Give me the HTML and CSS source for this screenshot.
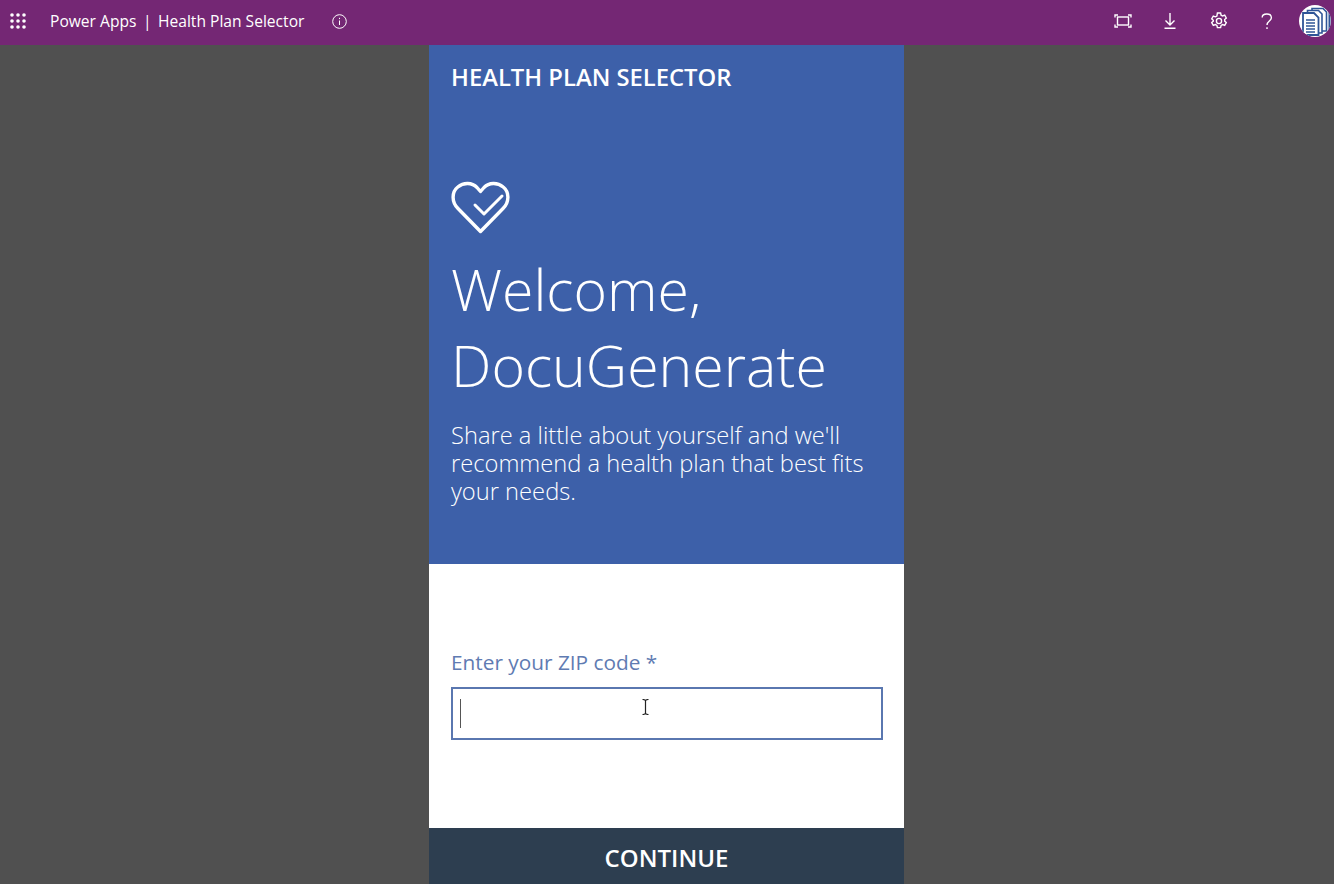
FILE: index.html
```html
<!DOCTYPE html>
<html lang="en">
<head>
  <meta charset="UTF-8">
  <title>Power Apps | Health Plan Selector</title>
  <link rel="stylesheet" href="styles.css">
</head>
<body>
  <!-- Top bar -->
  <div class="topbar">
    <svg class="waffle" width="16" height="16" viewBox="0 0 16 16" fill="#fff">
      <circle cx="2" cy="2" r="1.8"/><circle cx="8" cy="2" r="1.8"/><circle cx="14" cy="2" r="1.8"/>
      <circle cx="2" cy="8" r="1.8"/><circle cx="8" cy="8" r="1.8"/><circle cx="14" cy="8" r="1.8"/>
      <circle cx="2" cy="14" r="1.8"/><circle cx="8" cy="14" r="1.8"/><circle cx="14" cy="14" r="1.8"/>
    </svg>
    <div class="app-title"><span>Power Apps</span><span>|</span><span>Health Plan Selector</span></div>
    <svg class="info" width="15" height="15" viewBox="0 0 15 15" fill="none" stroke="#fff">
      <circle cx="7.5" cy="7.5" r="6.8"/>
      <path d="M7.5 6.5v4.5M7.5 3.8v1.3"/>
    </svg>
    <div class="actions">
      <div class="action">
        <svg width="18" height="14" viewBox="0 0 18 14" fill="none" stroke="#fff" stroke-width="1.4">
          <rect x="3.500" y="3" width="11" height="8"/>
          <path d="M1 3.500V1h3M14 1h3v2.500M1 10.500V13h3M14 13h3v-2.500"/>
        </svg>
      </div>
      <div class="action">
        <svg class="download" width="12" height="16" viewBox="0 0 12 16" fill="none" stroke="#fff" stroke-width="1.4">
          <path d="M6 0v12M1.500 7.500 6 12l4.500-4.500M0.500 15.300h11"/>
        </svg>
      </div>
      <div class="action">
        <svg width="18" height="18" viewBox="0 0 18 18" fill="none" stroke="#fff" stroke-width="1.4">
          <path d="M7.400 1h3.200l.5 2.200 1.500.8 2.100-.8 1.600 2.800-1.600 1.500v1.600l1.600 1.500-1.600 2.800-2.100-.8-1.500.8-.5 2.200H7.400l-.5-2.200-1.500-.8-2.100.8-1.600-2.800 1.600-1.500V8.300L1.700 6.800l1.600-2.800 2.100.8 1.500-.8z"/>
          <circle cx="9" cy="9" r="2.600"/>
        </svg>
      </div>
      <div class="action">
        <svg width="12" height="17" viewBox="0 0 12 17" fill="none" stroke="#fff" stroke-width="1.4">
          <path d="M1.200 4.500C1.200 2.400 3.200 1 5.800 1s4.600 1.500 4.600 3.700c0 3.300-4.400 3.400-4.400 7.300"/>
          <path d="M6 14.300v1.800"/>
        </svg>
      </div>
      <div class="avatar">
        <svg width="32" height="32" viewBox="0 0 32 32">
          <path d="M30.500 6v20" fill="none" stroke="#2f5597" stroke-width="2"/>
          <path d="M13 3.500h11l3.500 3.500v19H13z" fill="#fff" stroke="#2f5597" stroke-width="1.600"/>
          <path d="M8.500 5.500h11l3.500 3.500v19H8.500z" fill="#fff" stroke="#2f5597" stroke-width="1.600"/>
          <path d="M4 8h11l4.500 4.500V30H4z" fill="#fff" stroke="#2f5597" stroke-width="1.800"/>
          <path d="M7 15h9M7 18h9M7 21h9M7 24h9M7 27h9" stroke="#2f5597" stroke-width="1.600"/>
        </svg>
      </div>
    </div>
  </div>

  <!-- Canvas with the app screen -->
  <div class="stage">
    <div class="screen">
      <div class="hero">
        <div class="hero-title">HEALTH PLAN SELECTOR</div>
        <svg class="heart" width="60" height="54" viewBox="0 0 60 54" fill="none" stroke="#fff" stroke-width="3.400" stroke-linejoin="round" stroke-linecap="round">
          <path d="M29.500 50.500 7 27.500C.5 21 .5 11 6.800 6c6-5 14.200-4.500 19.200.5l3.500 4 3.500-4c5-5 13.200-5.500 19.200-.5 6.300 5 6.300 15-.2 21.500z"/>
          <path class="check" d="M24 24 33 33 51 15"/>
        </svg>
        <h1>Welcome,<br>DocuGenerate</h1>
        <p>Share a little about yourself and we'll recommend a health plan that best fits your needs.</p>
      </div>
      <div class="form">
        <label class="zip-label" for="zip">Enter your ZIP code *</label>
        <div class="zip-box" id="zip">
          <span class="caret"></span>
          <svg class="ibeam" width="7" height="16" viewBox="0 0 7 16" fill="none" stroke="#222" stroke-width="1.200">
            <path d="M.5.500c1.500 0 3 .5 3 1.500v12c0 1-1.500 1.500-3 1.500M6.500.500c-1.500 0-3 .5-3 1.500v12c0 1 1.500 1.500 3 1.500"/>
          </svg>
        </div>
      </div>
      <div class="continue">CONTINUE</div>
    </div>
  </div>
</body>
</html>
```
FILE: styles.css
```css
* {
  margin: 0;
  padding: 0;
  box-sizing: border-box;
}
html, body {
  height: 100%;
  overflow: hidden;
}
body {
  display: flex;
  flex-direction: column;
  background: #505050;
  font-family: 'Open Sans', sans-serif;
  color: #fff;
}
/* Top bar */
.topbar {
  flex: none;
  height: 45px;
  display: flex;
  align-items: center;
  background: #742774;
  padding: 0 3px 3px 10px;
}
.waffle {
  flex: none;
}
.app-title {
  margin-left: 24px;
  display: flex;
  gap: 6.5px;
  font-size: 15.6px;
  font-weight: 500;
  white-space: nowrap;
}
.info {
  margin-left: 28px;
}
.actions {
  margin-left: auto;
  display: flex;
  align-items: center;
}
.action {
  width: 48px;
  display: flex;
  justify-content: center;
}
.download {
  margin-right: 2px;
}
.avatar {
  width: 32px;
  height: 32px;
  margin-left: 8px;
  border-radius: 50%;
  background: #fff;
  overflow: hidden;
}
.avatar svg {
  display: block;
}
/* App screen */
.stage {
  flex: 1;
  min-height: 0;
  display: flex;
  justify-content: center;
  padding-right: 1px;
}
.screen {
  width: 475px;
  display: flex;
  flex-direction: column;
  background: #fff;
}
.hero {
  height: 519px;
  flex: none;
  background: #3d60a9;
  padding: 17px 22px 0;
}
.hero-title {
  font-size: 23.8px;
  font-weight: 600;
  line-height: 30px;
}
.heart {
  display: block;
  margin-top: 89px;
}
.check {
  stroke-width: 3;
}
h1 {
  margin-top: 17px;
  font-size: 57.2px;
  font-weight: 300;
  line-height: 75.5px;
}
.hero p {
  margin-top: 18px;
  font-size: 23.7px;
  font-weight: 300;
  line-height: 28px;
}
.form {
  flex: 1;
  padding: 83px 21px 0 22px;
}
.zip-label {
  display: block;
  font-size: 20.8px;
  line-height: 30px;
  color: #5f7bb2;
}
.zip-box {
  position: relative;
  height: 53px;
  margin-top: 10px;
  border: 2px solid #5a77b0;
}
.caret {
  position: absolute;
  left: 7px;
  top: 10px;
  width: 1px;
  height: 29px;
  background: #555;
}
.ibeam {
  position: absolute;
  left: 189px;
  top: 10px;
}
.continue {
  flex: none;
  height: 56px;
  display: flex;
  align-items: center;
  justify-content: center;
  padding-top: 2px;
  background: #2d3e50;
  font-size: 24px;
  font-weight: 600;
}
```
